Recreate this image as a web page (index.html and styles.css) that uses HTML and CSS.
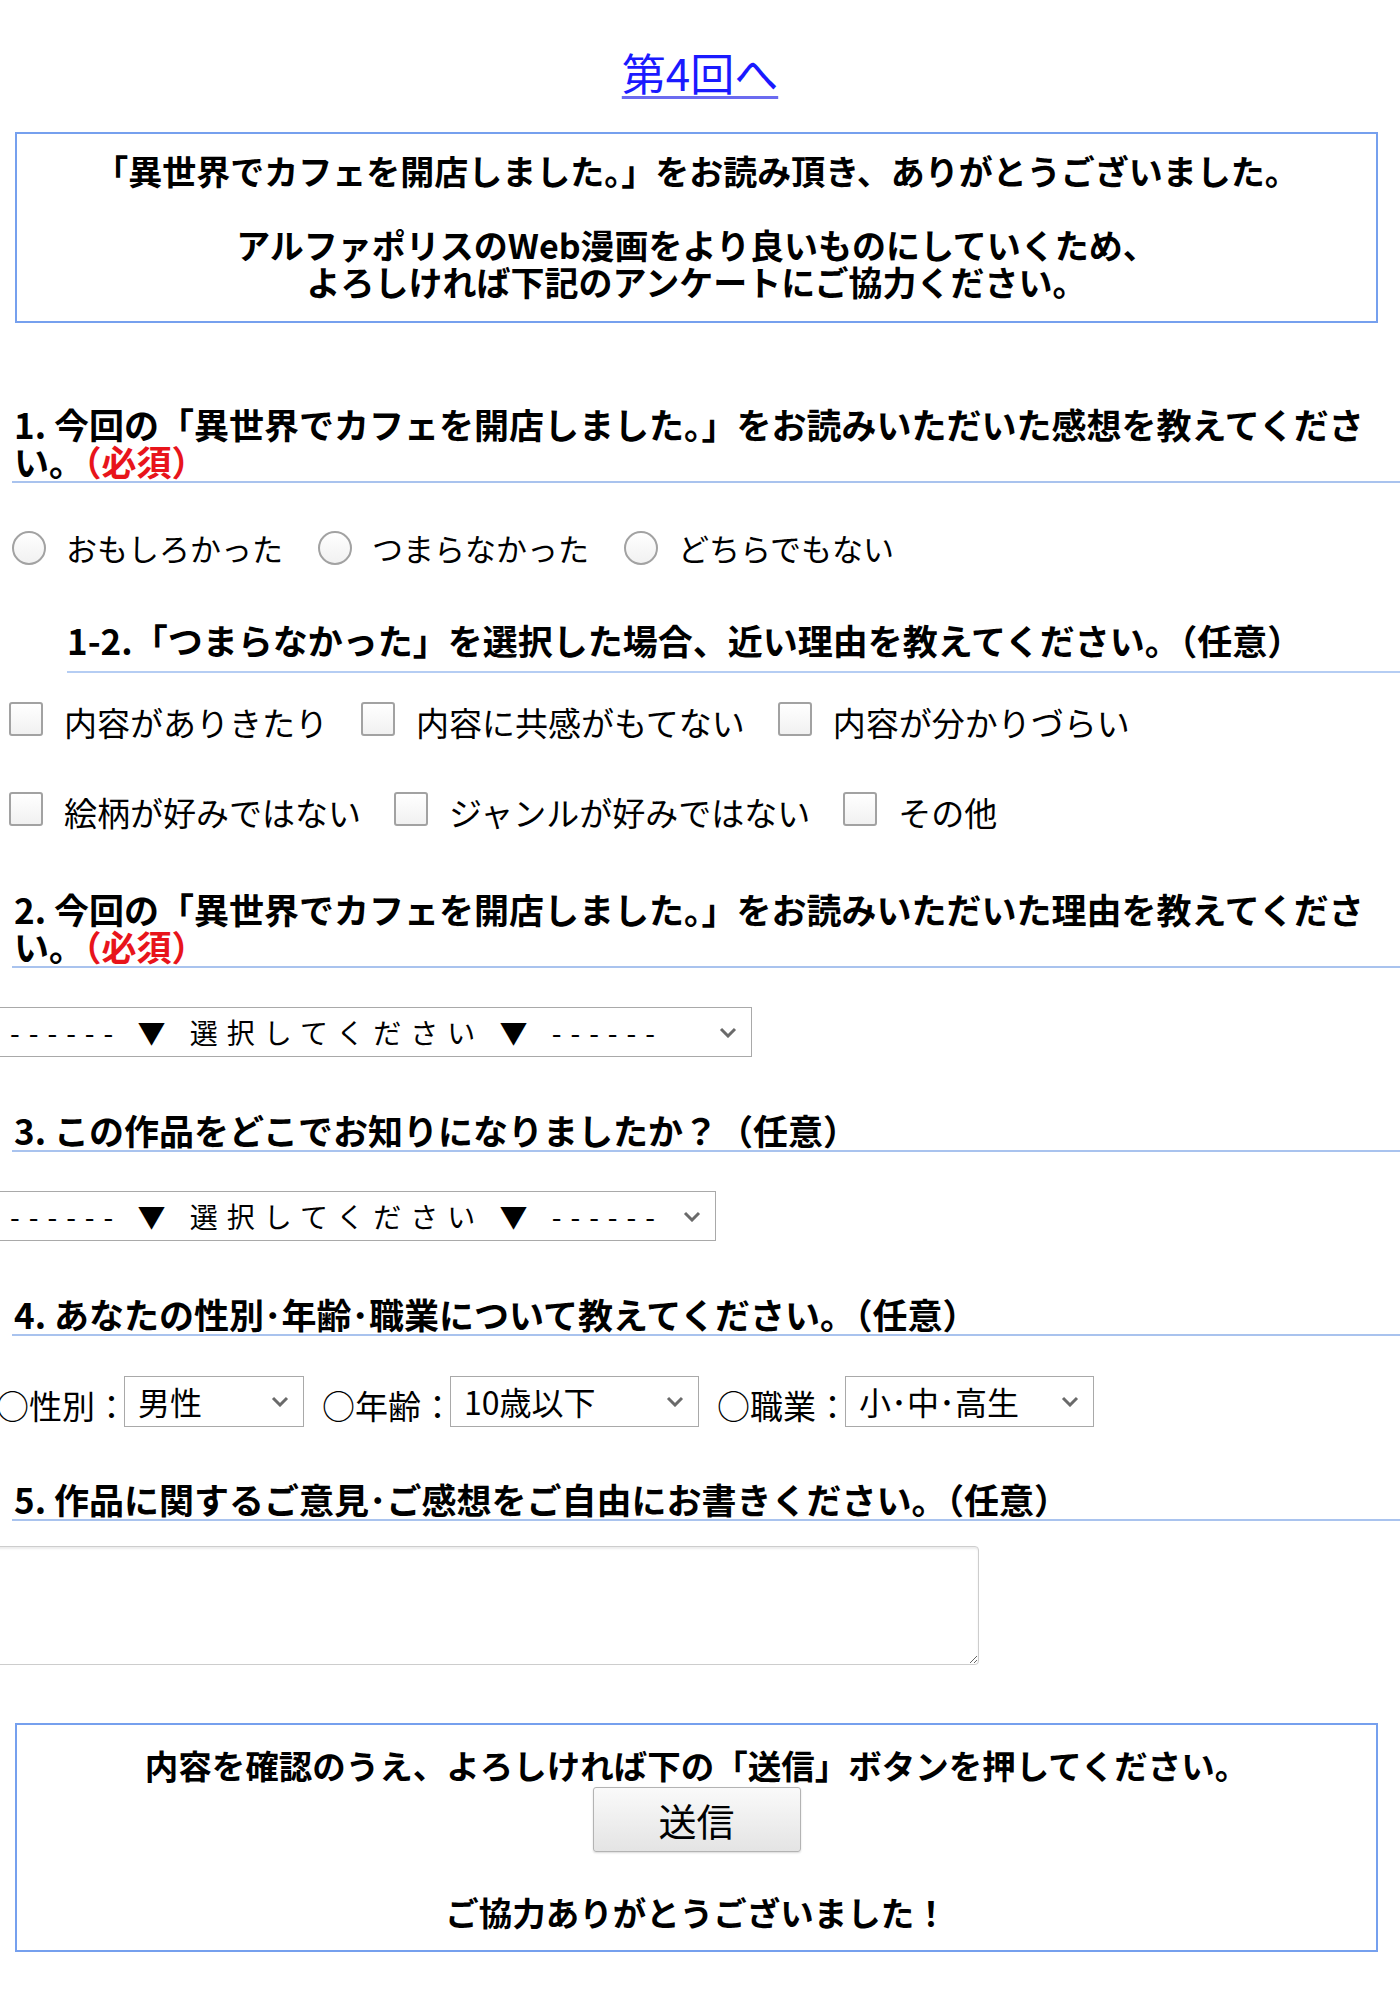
FILE: index.html
```html
<!DOCTYPE html>
<html lang="ja">
<head>
<meta charset="utf-8"/>
<meta content="width=device-width, initial-scale=1.0" name="viewport"/>
<title>アンケート</title>
<link rel="stylesheet" href="styles.css">
</head>
<body>
<p class="next"><a href="#">第4回へ</a></p>

<div class="box intro">
<p>「異世界でカフェを開店しました。」をお読み頂き、ありがとうございました。<br><br>アルファポリスのWeb漫画をより良いものにしていくため、<br>よろしければ下記のアンケートにご協力ください。</p>
</div>

<form class="enquete" onsubmit="return false">
<h3 class="q q1">1. 今回の「異世界でカフェを開店しました。」をお読みいただいた感想を教えてください。<span class="req">（必須）</span></h3>
<div class="choices radios">
<label><input type="radio" name="impression">おもしろかった</label>
<label><input type="radio" name="impression">つまらなかった</label>
<label><input type="radio" name="impression">どちらでもない</label>
</div>

<h4 class="sub">1-2.「つまらなかった」を選択した場合、近い理由を教えてください。（任意）</h4>
<div class="choices checks row1">
<label><input type="checkbox">内容がありきたり</label>
<label><input type="checkbox">内容に共感がもてない</label>
<label><input type="checkbox">内容が分かりづらい</label>
</div>
<div class="choices checks row2">
<label><input type="checkbox">絵柄が好みではない</label>
<label><input type="checkbox">ジャンルが好みではない</label>
<label><input type="checkbox">その他</label>
</div>

<h3 class="q q2">2. 今回の「異世界でカフェを開店しました。」をお読みいただいた理由を教えてください。<span class="req">（必須）</span></h3>
<div class="pick">
<select class="long w1"><option>------ ▼ 選択してください ▼ ------</option></select>
<svg width="18" height="11" viewBox="0 0 18 11"><polyline points="2,2 9,9 16,2" fill="none" stroke="#6a6a6a" stroke-width="3"/></svg>
</div>

<h3 class="q q3">3. この作品をどこでお知りになりましたか？（任意）</h3>
<div class="pick">
<select class="long w2"><option>------ ▼ 選択してください ▼ ------</option></select>
<svg width="18" height="11" viewBox="0 0 18 11"><polyline points="2,2 9,9 16,2" fill="none" stroke="#6a6a6a" stroke-width="3"/></svg>
</div>

<h3 class="q q4">4. あなたの性別･年齢･職業について教えてください。（任意）</h3>
<div class="profile">
<span>○性別：</span>
<div class="pick">
<select class="short sex"><option>男性</option><option>女性</option></select>
<svg width="18" height="11" viewBox="0 0 18 11"><polyline points="2,2 9,9 16,2" fill="none" stroke="#6a6a6a" stroke-width="3"/></svg>
</div>
<span>○年齢：</span>
<div class="pick">
<select class="short"><option>10歳以下</option><option>11～15歳</option></select>
<svg width="18" height="11" viewBox="0 0 18 11"><polyline points="2,2 9,9 16,2" fill="none" stroke="#6a6a6a" stroke-width="3"/></svg>
</div>
<span>○職業：</span>
<div class="pick">
<select class="short"><option>小･中･高生</option><option>大学生</option></select>
<svg width="18" height="11" viewBox="0 0 18 11"><polyline points="2,2 9,9 16,2" fill="none" stroke="#6a6a6a" stroke-width="3"/></svg>
</div>
</div>

<h3 class="q q5">5. 作品に関するご意見･ご感想をご自由にお書きください。（任意）</h3>
<textarea class="opinion"></textarea>

<div class="box foot">
<p>内容を確認のうえ、よろしければ下の「送信」ボタンを押してください。</p>
<button class="send" type="submit">送信</button>
<p class="thanks">ご協力ありがとうございました！</p>
</div>
</form>
</body>
</html>
```

FILE: styles.css
```css
body {
  margin: 0;
  background: #fff;
  color: #000;
  font-family: "Noto Sans CJK JP", "Noto Sans", sans-serif;
}
.next {
  margin: 0;
  padding-top: 47px;
  text-align: center;
  font-size: 44px;
  line-height: 50px;
}
.next a {
  color: #1a1aff;
  text-decoration: underline;
  text-decoration-color: #6b6bf0;
  text-decoration-thickness: 3px;
  text-underline-offset: 5px;
}
.box {
  margin: 35px 22px 0 15px;
  border: 2px solid #76a0ee;
  padding: 18px 10px 21px;
  text-align: center;
  font-size: 34px;
  font-weight: bold;
  line-height: 37px;
}
.box p { margin: 0; }

/* questions */
.q {
  margin: 82px 0 0 12px;
  padding: 0 10px 2px 2px;
  border-bottom: 2px solid #a9c3ee;
  font-size: 35px;
  line-height: 37px;
  font-weight: bold;
}
.q2 { margin-top: 60px; }
.q3 { margin-top: 54.5px; }
.q4 { margin-top: 54.5px; }
.q5 { margin-top: 53.5px; }
.req { color: #e8141b; }
.sub {
  margin: 55px 0 0 67px;
  padding-bottom: 13px;
  border-bottom: 2px solid #b5cdf3;
  font-size: 35px;
  line-height: 37px;
  font-weight: bold;
}

/* radio / checkbox rows */
.choices {
  display: flex;
  align-items: center;
  height: 37px;
}
.choices label {
  display: flex;
  align-items: center;
}
.radios { margin-top: 46px; padding-left: 12px; font-size: 31px; }
.radios label { gap: 20px; margin-right: 35px; }
.checks { padding-left: 9px; font-size: 33px; }
.checks label { gap: 21px; margin-right: 33px; }
.row1 { margin-top: 30px; }
.row2 { margin-top: 53px; }
.choices input {
  appearance: none;
  margin: 0;
  width: 34px;
  height: 34px;
  box-sizing: border-box;
  border: 2px solid #a2a2a2;
  background: linear-gradient(#fff, #f1f1f1);
}
.radios input { border-radius: 50%; }
.checks input { border-radius: 3px; margin-top: -6px; }

/* selects */
.pick {
  position: relative;
  width: fit-content;
  margin-left: -4px;
}
.pick select {
  appearance: none;
  display: block;
  box-sizing: border-box;
  height: 50px;
  margin: 0;
  border: 1px solid #a9a9a9;
  border-radius: 0;
  background: #fff;
  color: #000;
  font-family: inherit;
  font-size: 30px;
  padding: 0 40px 0 13px;
}
.pick svg {
  position: absolute;
  right: 15px;
  top: 50%;
  margin-top: -5px;
}
.long { font-size: 28px !important; letter-spacing: 9px; }
.w1 { width: 756px; }
.pick:has(.w1) { margin-top: 38.5px; }
.w2 { width: 720px; }
.pick:has(.w2) { margin-top: 38.5px; }

.profile {
  display: flex;
  align-items: center;
  height: 51px;
  margin: 39.5px 0 0 -4px;
  font-size: 33px;
  white-space: nowrap;
}
.profile span { padding-top: 8px; }
.profile .pick { margin-left: -4px; margin-right: 18px; }
.profile select { height: 51px; font-size: 32px; width: 249px; }
.profile select.sex { width: 180px; }

.opinion {
  display: block;
  box-sizing: border-box;
  width: 983px;
  height: 119px;
  margin: 24.5px 0 0 -4px;
  border: 1px solid #cdcdcd;
  border-radius: 4px;
  box-shadow: inset 0 2px 2px rgba(0,0,0,0.08);
  font-family: inherit;
  font-size: 30px;
}

/* footer box */
.foot {
  margin-top: 58px;
  padding: 21px 10px 20px;
  font-size: 33.5px;
}
.send {
  display: block;
  width: 208px;
  height: 65px;
  margin: 4px auto 0;
  border: 1px solid #b3b3b3;
  border-radius: 3px;
  background: linear-gradient(#fafafa, #e4e4e4);
  box-shadow: 0 1px 2px rgba(0,0,0,0.15);
  color: #000;
  font-family: inherit;
  font-size: 38px;
  font-weight: normal;
}
.thanks { margin-top: 41.5px !important; }
```
